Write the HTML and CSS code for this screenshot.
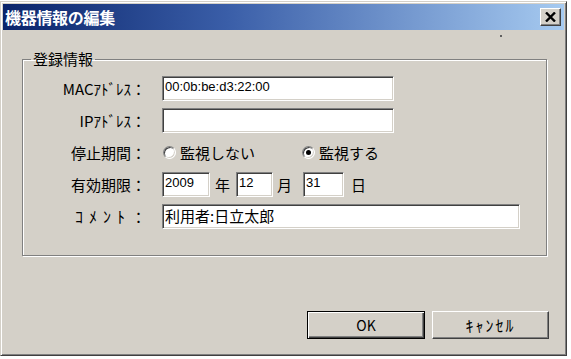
FILE: index.html
```html
<!DOCTYPE html>
<html lang="ja">
<head>
<meta charset="utf-8">
<title>機器情報の編集</title>
<link rel="stylesheet" href="styles.css">
</head>
<body>
<div class="window">
  <div class="titlebar">
    <span class="title">機器情報の編集</span>
    <button class="close" type="button" aria-label="閉じる">
      <svg width="11" height="10" viewBox="0 0 11 10"><path d="M1 0.5 L10 9.5 M10 0.5 L1 9.5" stroke="#000" stroke-width="2.4" fill="none"/></svg>
    </button>
  </div>
  <div class="body">
    <fieldset class="group">
      <legend class="legend">登録情報</legend>
      <div class="form">
        <div class="lbl">MACｱﾄﾞﾚｽ：</div>
        <div class="field"><input class="inp latin w-addr" type="text" value="00:0b:be:d3:22:00"></div>

        <div class="lbl">IPｱﾄﾞﾚｽ：</div>
        <div class="field"><input class="inp latin w-addr" type="text" value=""></div>

        <div class="lbl">停止期間：</div>
        <div class="field">
          <span class="radio"></span><span class="rtext r1">監視しない</span>
          <span class="radio on"></span><span class="rtext">監視する</span>
        </div>

        <div class="lbl">有効期限：</div>
        <div class="field">
          <input class="inp latin w-year" type="text" value="2009"><span class="unit u-year">年</span>
          <input class="inp latin w-month" type="text" value="12"><span class="unit u-month">月</span>
          <input class="inp latin w-day" type="text" value="31"><span class="unit">日</span>
        </div>

        <div class="lbl"><span class="kana-wide">ｺﾒﾝﾄ</span>：</div>
        <div class="field"><input class="inp cjk w-comment" type="text" value="利用者:日立太郎"></div>
      </div>
    </fieldset>
    <div class="buttons">
      <button class="btn default" type="button">OK</button>
      <button class="btn cancel" type="button"><span class="kana-btn">ｷｬﾝｾﾙ</span></button>
    </div>
  </div>
</div>
<span class="speck"></span>
</body>
</html>
```
FILE: styles.css
```css
* { box-sizing: border-box; }

body {
  margin: 0;
  padding-top: 1px;
  background: #ffffff;
  font-family: "Noto Sans CJK JP", "Noto Sans", sans-serif;
  color: #000;
  position: relative;
}

.window {
  width: 567px;
  height: 355px;
  background: #d4d0c8;
  border: 1px solid;
  border-color: #d4d0c8 #404040 #404040 #d4d0c8;
  box-shadow: inset 1px 1px 0 #ffffff, inset -1px -1px 0 #808080;
  padding: 2px;
  display: flex;
  flex-direction: column;
}

.titlebar {
  height: 26px;
  background: linear-gradient(to right, #0a246a 0%, #3a5ea8 40%, #a6caf0 100%);
  display: flex;
  align-items: center;
  justify-content: space-between;
  padding: 0 3px 0 2px;
}

.title {
  color: #fff;
  font-weight: bold;
  font-size: 16px;
  line-height: 1;
  letter-spacing: -0.3px;
}

.close {
  width: 21px;
  height: 18px;
  padding: 0;
  background: #d4d0c8;
  border: 1px solid;
  border-color: #ffffff #404040 #404040 #ffffff;
  box-shadow: inset -1px -1px 0 #808080;
  display: flex;
  align-items: center;
  justify-content: center;
}

.body {
  flex: 1;
  display: flex;
  flex-direction: column;
  padding: 19px 17px 14px 19px;
}

.group {
  margin: 0;
  padding: 7px 0 26px 0;
  border: 1px solid #808080;
  box-shadow: 1px 1px 0 #ffffff, inset 1px 1px 0 #ffffff;
}

.legend {
  margin-left: 8px;
  padding: 0 2px;
  font-size: 15px;
  line-height: 20px;
}

.form {
  display: grid;
  grid-template-columns: 123px auto;
  grid-auto-rows: 25px;
  column-gap: 16px;
  row-gap: 7px;
}

.lbl {
  font-size: 15px;
  line-height: 25px;
  text-align: right;
  white-space: nowrap;
}

.kana-wide {
  font-size: 16px;
  letter-spacing: 6px;
}

.field {
  display: flex;
  align-items: center;
  font-size: 15px;
}

.inp {
  height: 25px;
  margin: 0;
  padding: 1px 2px 5px 2px;
  background: #fff;
  border: 1px solid;
  border-color: #808080 #ffffff #ffffff #808080;
  box-shadow: inset 1px 1px 0 #404040, inset -1px -1px 0 #d4d0c8;
  outline: none;
  color: #000;
}

.latin {
  font-family: "Liberation Sans", Arial, sans-serif;
  font-size: 13px;
}

.cjk {
  font-family: "Noto Sans CJK JP", sans-serif;
  font-size: 15px;
  padding: 0 2px 2px 2px;
}

.w-addr { width: 232px; }
.w-year { width: 48px; }
.w-month { width: 37px; }
.w-day { width: 41px; }
.w-comment { width: 358px; }

.unit { line-height: 25px; }
.w-year { margin-right: 5px; }
.u-year { margin-right: 6px; }
.w-month { margin-right: 4px; }
.u-month { margin-right: 11px; }
.w-day { margin-right: 7px; }

.radio {
  width: 13px;
  height: 13px;
  margin-left: 1px;
  margin-right: 4px;
  border-radius: 50%;
  border: 1px solid;
  border-color: #808080 #ffffff #ffffff #808080;
  background: #fff;
  box-shadow: inset 1px 1px 0 #404040, inset -1px -1px 0 #d4d0c8;
  display: flex;
  align-items: center;
  justify-content: center;
}

.radio.on::after {
  content: "";
  width: 5px;
  height: 5px;
  border-radius: 50%;
  background: #000;
}

.rtext { line-height: 25px; }
.r1 { margin-right: 46px; }

.buttons {
  margin-top: auto;
  margin-right: -2px;
  display: flex;
  justify-content: flex-end;
  gap: 7px;
}

.btn {
  height: 28px;
  margin: 0;
  padding: 0;
  background: #d4d0c8;
  font-family: "Noto Sans CJK JP", sans-serif;
  font-size: 14px;
  color: #000;
  border: 1px solid;
  border-color: #ffffff #404040 #404040 #ffffff;
  box-shadow: inset -1px -1px 0 #808080;
}

.kana-btn {
  font-size: 16px;
  letter-spacing: 2px;
}

.btn.default {
  width: 118px;
  border: 1px solid #000;
  box-shadow: inset 1px 1px 0 #ffffff, inset -1px -1px 0 #404040, inset -2px -2px 0 #808080;
}

.btn.cancel { width: 117px; }

.speck {
  position: absolute;
  left: 500px;
  top: 35px;
  width: 2px;
  height: 2px;
  background: #606060;
}
```
